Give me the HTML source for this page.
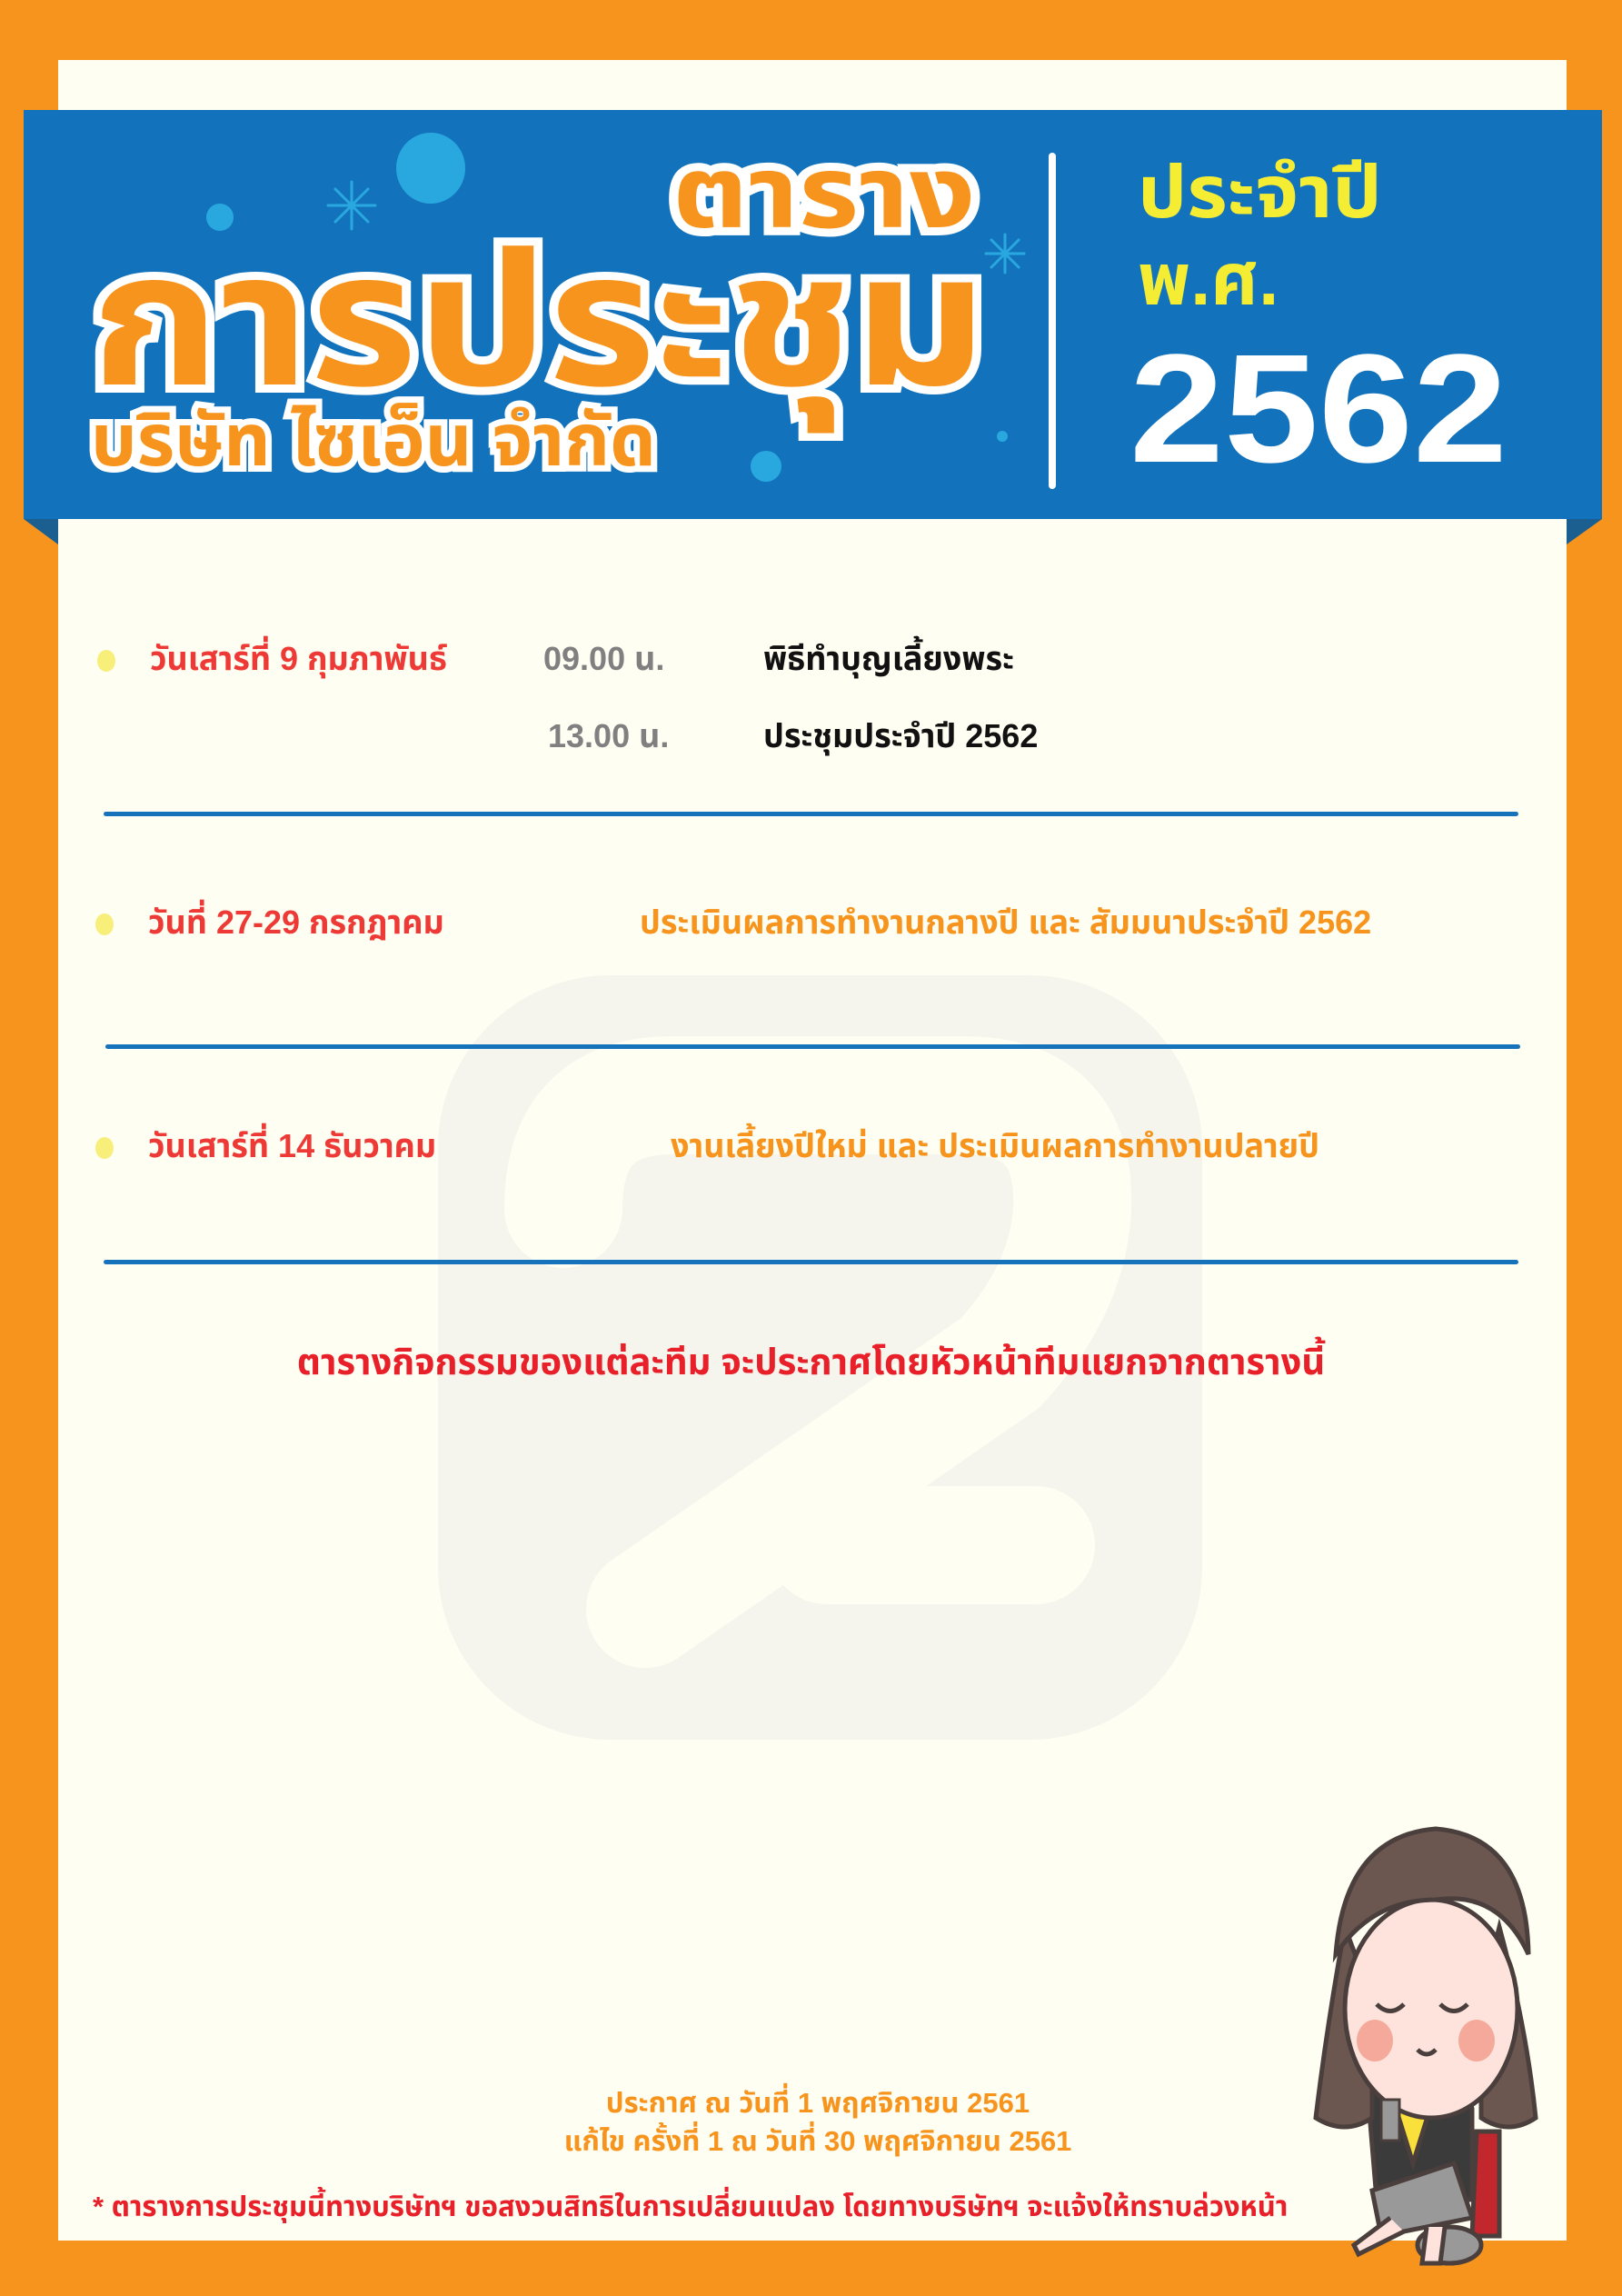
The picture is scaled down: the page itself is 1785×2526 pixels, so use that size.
<!DOCTYPE html>
<html><head><meta charset="utf-8">
<style>
*{margin:0;padding:0;box-sizing:border-box}
body{width:1785px;height:2526px;background:#f7941d;position:relative;overflow:hidden;font-family:"Liberation Sans","Noto Sans Thai","Garuda","Loma","Norasi",sans-serif;font-weight:bold}
.panel{position:absolute;left:64px;top:66px;width:1660px;height:2399px;background:#fefef2}
.banner{position:absolute;left:26px;top:121px;width:1737px;height:450px;background:#1273bc}
.t{position:absolute;white-space:nowrap;line-height:1;transform-origin:left top}
.out{color:#f7941d;-webkit-text-stroke:18px #fff;paint-order:stroke fill}
.line{position:absolute;left:114px;width:1557px;height:5px;background:#1673bb;border-radius:3px}
.dot{position:absolute;width:20px;height:24px;border-radius:50%;background:#f8ee7a}
</style></head><body>
<div class="panel"></div>
<svg style="position:absolute;left:0;top:0" width="1785" height="2526">
<rect x="482" y="1073" width="841" height="841" rx="190" fill="#f5f5ee"/>
<path d="M620 1330 Q620 1205 740 1205 L1060 1205 Q1185 1205 1180 1330 Q1175 1420 1100 1500 L710 1770" stroke="#fefef2" stroke-width="130" fill="none" stroke-linecap="round"/>
<path d="M910 1700 L1140 1700" stroke="#fefef2" stroke-width="130" fill="none" stroke-linecap="round"/>
</svg>
<div class="banner"></div>
<svg style="position:absolute;left:0;top:0" width="1785" height="620">
<polygon points="26,571 64,571 64,599" fill="#1a5f8f"/>
<polygon points="1763,571 1724,571 1724,599" fill="#1a5f8f"/>
<ellipse cx="474" cy="185" rx="38" ry="39" fill="#29a8e0"/>
<circle cx="242" cy="239" r="15" fill="#29a8e0"/>
<circle cx="843" cy="513" r="17" fill="#29a8e0"/>
<circle cx="1103" cy="480" r="6" fill="#29a8e0"/>
<g stroke="#29a8e0" stroke-width="3" stroke-linecap="round">
<path d="M387 200 V252 M361 226 H413 M369 208 L405 244 M405 208 L369 244"/>
<path d="M1106 258 V300 M1085 279 H1127 M1091 264 L1121 294 M1121 264 L1091 294"/>
</g>
<rect x="1154" y="168" width="8" height="370" rx="4" fill="#fff"/>
</svg>
<div class="t out" style="left:740px;top:158px;font-size:110px;transform:scaleX(1.16)">ตาราง</div>
<div class="t out" style="left:100px;top:250px;font-size:205px;transform:scaleX(1.11)">การประชุม</div>
<div class="t out" style="left:100px;top:445px;font-size:80px;-webkit-text-stroke:14px #fff">บริษัท ไซเอ็น จำกัด</div>
<div class="t" style="left:1252px;top:172px;font-size:80px;color:#f5ec34;transform:scaleX(1.07)">ประจำปี</div>
<div class="t" style="left:1252px;top:268px;font-size:80px;color:#f5ec34">พ.ศ.</div>
<div class="t" style="left:1243px;top:365px;font-size:170px;color:#fff;transform:scaleX(1.1)">2562</div>

<div class="dot" style="left:107px;top:715px"></div>
<div class="t" style="left:165px;top:707px;font-size:36px;color:#ee3a36">วันเสาร์ที่ 9 กุมภาพันธ์</div>
<div class="t" style="left:598px;top:707px;font-size:36px;color:#808080">09.00 น.</div>
<div class="t" style="left:840px;top:707px;font-size:36px;color:#111">พิธีทำบุญเลี้ยงพระ</div>
<div class="t" style="left:603px;top:792px;font-size:36px;color:#808080">13.00 น.</div>
<div class="t" style="left:840px;top:792px;font-size:36px;color:#111">ประชุมประจำปี 2562</div>
<div class="line" style="top:893px"></div>

<div class="dot" style="left:105px;top:1005px"></div>
<div class="t" style="left:163px;top:997px;font-size:36px;color:#ee3a36">วันที่ 27-29 กรกฎาคม</div>
<div class="t" style="left:704px;top:997px;font-size:36px;color:#f7941d">ประเมินผลการทำงานกลางปี และ สัมมนาประจำปี 2562</div>
<div class="line" style="top:1149px;left:116px"></div>

<div class="dot" style="left:105px;top:1251px"></div>
<div class="t" style="left:163px;top:1243px;font-size:36px;color:#ee3a36">วันเสาร์ที่ 14 ธันวาคม</div>
<div class="t" style="left:738px;top:1243px;font-size:36px;color:#f7941d">งานเลี้ยงปีใหม่ และ ประเมินผลการทำงานปลายปี</div>
<div class="line" style="top:1386px"></div>

<div class="t" style="left:0;width:1785px;text-align:center;top:1479px;font-size:40px;color:#e8202a">ตารางกิจกรรมของแต่ละทีม จะประกาศโดยหัวหน้าทีมแยกจากตารางนี้</div>

<div class="t" style="left:0;width:1800px;text-align:center;top:2298px;font-size:31px;color:#f7941d">ประกาศ ณ วันที่ 1 พฤศจิกายน 2561</div>
<div class="t" style="left:0;width:1800px;text-align:center;top:2340px;font-size:31px;color:#f7941d">แก้ไข ครั้งที่ 1 ณ วันที่ 30 พฤศจิกายน 2561</div>
<div class="t" style="left:102px;top:2412px;font-size:31px;color:#e8202a">* ตารางการประชุมนี้ทางบริษัทฯ ขอสงวนสิทธิในการเปลี่ยนแปลง โดยทางบริษัทฯ จะแจ้งให้ทราบล่วงหน้า</div>

<svg style="position:absolute;left:1420px;top:2000px" width="310" height="500" stroke="#4a3f3c" stroke-width="5">
<path d="M205 345 L230 345 L230 460 L200 460 Z" fill="#c1272d"/>
<ellipse cx="175" cy="470" rx="35" ry="20" fill="#999"/>
<path d="M85 300 Q100 270 140 270 Q190 275 200 320 L200 420 L95 420 Z" fill="#3b3b3b"/>
<path d="M110 300 L135 380 L160 300 Z" fill="#f9e03a"/>
<path d="M90 410 L180 380 L200 440 L100 460 Z" fill="#999"/>
<path d="M110 440 L70 470 L75 480 L125 455" fill="#fde3dc"/>
<path d="M150 450 L145 490 L165 490 L170 450" fill="#fde3dc"/>
<path d="M60 120 Q40 230 28 330 Q60 350 90 330 L90 200 Z" fill="#6b5750"/>
<path d="M230 120 Q260 230 270 330 Q240 350 210 330 L210 200 Z" fill="#6b5750"/>
<ellipse cx="155" cy="210" rx="95" ry="120" fill="#fde3dc"/>
<ellipse cx="93" cy="245" rx="20" ry="23" fill="#f5a99a" stroke="none"/>
<ellipse cx="205" cy="245" rx="20" ry="23" fill="#f5a99a" stroke="none"/>
<path d="M95 205 Q110 220 125 205 M165 205 Q180 220 195 205 M140 255 Q150 265 160 255" fill="none"/>
<path d="M50 150 Q60 20 160 12 Q260 20 262 150 Q230 80 160 90 Q90 90 50 150 Z" fill="#6b5750"/>
<path d="M100 310 L100 355 L120 355 L120 310 Z" fill="#999" stroke-width="3"/>
</svg>
</body></html>
